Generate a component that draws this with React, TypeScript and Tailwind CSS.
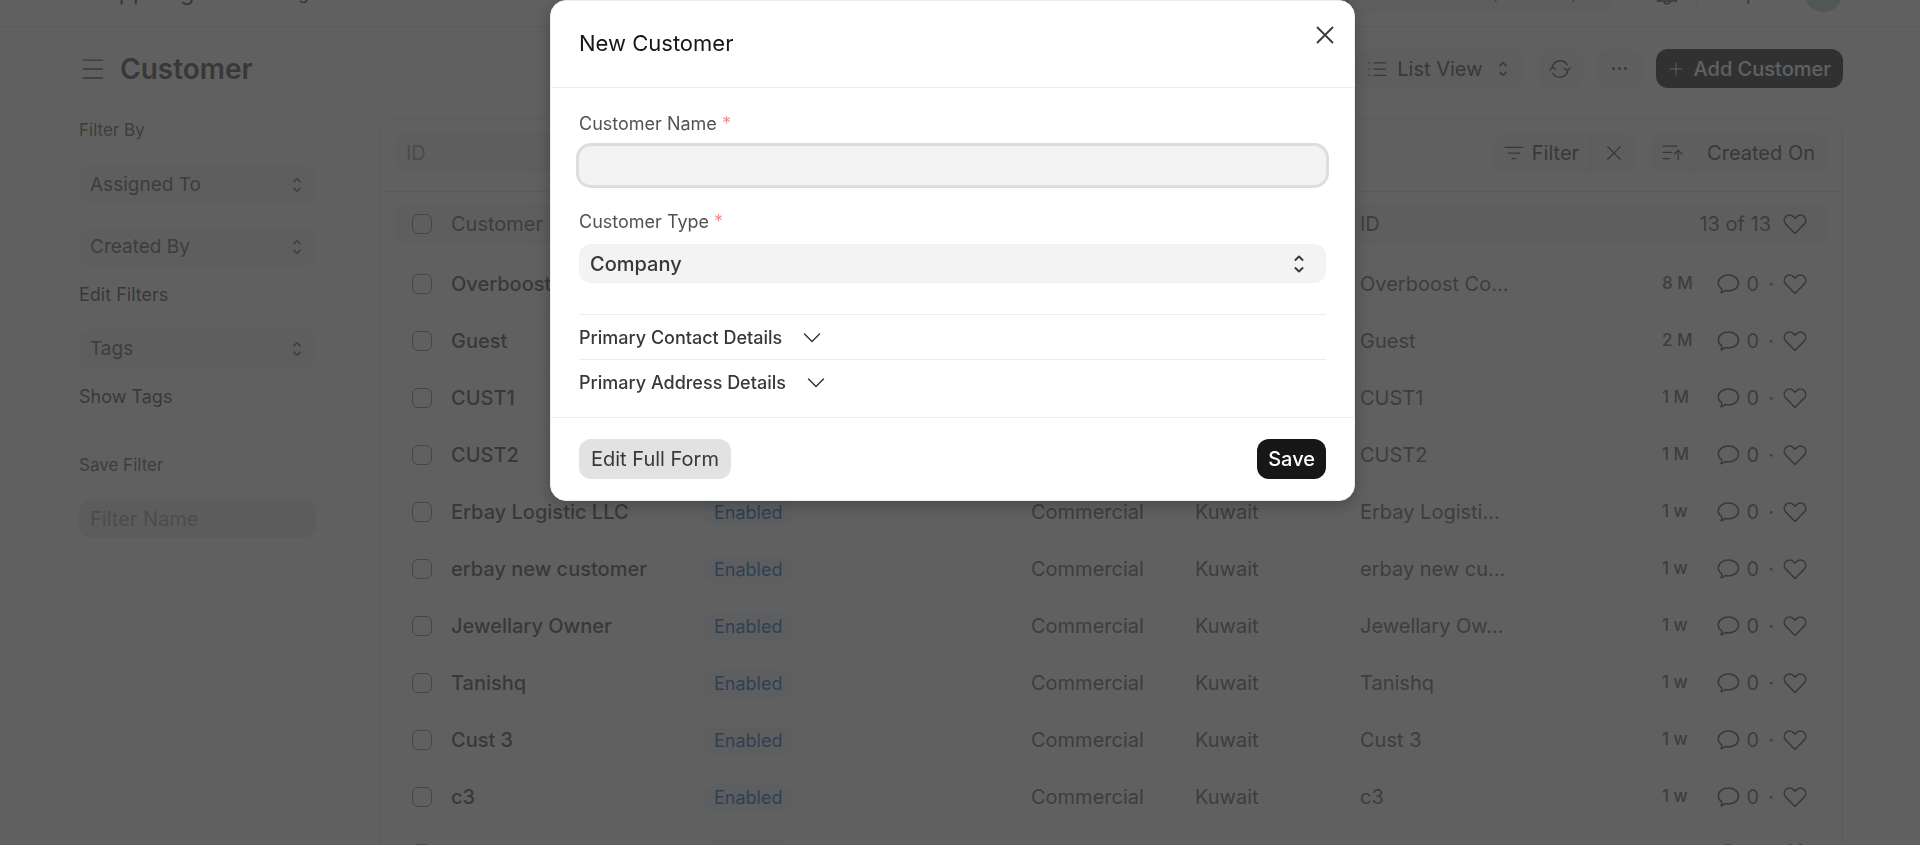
import { useState } from "react";

interface Customer {
  name: string;
  shortId: string;
  modified: string;
}

const customers: Customer[] = [
  { name: "Overboost Company", shortId: "Overboost Co…", modified: "8 M" },
  { name: "Guest", shortId: "Guest", modified: "2 M" },
  { name: "CUST1", shortId: "CUST1", modified: "1 M" },
  { name: "CUST2", shortId: "CUST2", modified: "1 M" },
  { name: "Erbay Logistic LLC", shortId: "Erbay Logisti…", modified: "1 w" },
  { name: "erbay new customer", shortId: "erbay new cu…", modified: "1 w" },
  { name: "Jewellary Owner", shortId: "Jewellary Ow…", modified: "1 w" },
  { name: "Tanishq", shortId: "Tanishq", modified: "1 w" },
  { name: "Cust 3", shortId: "Cust 3", modified: "1 w" },
  { name: "c3", shortId: "c3", modified: "1 w" },
  { name: "c2", shortId: "c2", modified: "1 w" },
];

const paths = {
  menu: "M1 1.5h14M1 8h14M1 14.5h14",
  select: "M5.6 5.3 8 3l2.4 2.3M5.6 10.7 8 13l2.4-2.3",
  close: "M3 3l10 10M13 3 3 13",
  plus: "M8 2v12M2 8h12",
  chevron: "M3 6l5 5 5-5",
  list: "M5.5 3H15M5.5 8H15M5.5 13H15M1.5 3h.5M1.5 8h.5M1.5 13h.5",
  filter: "M1 3.5h14M3.5 8h9M6.5 12.5h3",
  sort: "M1 2.5h11M1 7.5h7M1 12.5h5M13 13V6M10 8.8l3-3 3 3",
  refresh: "M2.3 7.2a5.9 5.9 0 0 1 10.9-2.3M13.7 8.800a5.9 5.9 0 0 1-10.900 2.300M.7 9l1.700-2.400L4.700 8.300M15.300 7l-1.700 2.400-2.300-1.700",
  heart: "M8 14.3 1.9 8.1C.5 6.6.5 4.500 1.800 3.100 3.200 1.700 5.500 1.700 6.900 3.100L8 4.200l1.100-1.100c1.400-1.400 3.700-1.400 5.100 0 1.300 1.400 1.300 3.500-.1 5z",
  comment: "M8.300 2c3.800 0 6.700 2.300 6.700 5.300s-2.900 5.300-6.700 5.300c-.8 0-1.600-.1-2.300-.3-.6.9-1.400 1.500-2.700 1.500.6-.9.8-1.700.5-2.700C2.400 10.200 1.500 8.900 1.500 7.300 1.500 4.300 4.500 2 8.300 2z",
  bell: "M1.700 13.300h12.600c-1.300-1-2-2-2-4.800 0-2.700-1.800-4.500-4.300-4.500S3.700 5.800 3.700 8.500c0 2.800-.7 3.800-2 4.800zM6 13.500c0 2.200 4 2.200 4 0",
};

function Icon({ name, className }: { name: keyof typeof paths; className: string }) {
  return (
    <svg
      viewBox="0 0 16 16"
      fill="none"
      stroke="currentColor"
      strokeWidth={name === "select" ? 1.3 : 1}
      strokeLinecap="round"
      strokeLinejoin="round"
      className={`shrink-0 overflow-visible ${className}`}
      aria-hidden="true"
    >
      <path d={paths[name]} />
    </svg>
  );
}

function Navbar() {
  return (
    <header className="h-[27px] overflow-hidden border-b border-[#e2e2e2]">
      <div className="-mt-[41px] flex h-[67px] items-center pr-[77px] pl-[79px]">
        <a href="#home" className="ml-6 text-[23px]">App Logo</a>
        <a href="#selling" className="ml-11 text-[18px]">Selling</a>
        <input
          aria-label="Search"
          placeholder="Search or type a command (Ctrl + G)"
          className="ml-auto h-10 w-[420px] rounded-xl bg-[#f3f3f3] px-9 text-[20px] placeholder:text-[#7c7c7c]"
        />
        <button aria-label="Notifications" className="ml-[42px]">
          <Icon name="bell" className="size-6" />
        </button>
        <div className="ml-[18px] h-9 w-px bg-[#d1d1d1]" />
        <button className="ml-4 flex items-center gap-2 text-[20px]">
          Help <Icon name="chevron" className="size-4" />
        </button>
        <div className="ml-[22px] size-[39px] rounded-full bg-[#b0d4c4]" />
      </div>
    </header>
  );
}

function SidebarButton({ label }: { label: string }) {
  return (
    <button className="flex h-10 w-full items-center justify-between rounded-xl bg-[#f3f3f3] pr-[9px] pl-[11px] text-[19px] text-[#525252]">
      {label}
      <Icon name="select" className="size-5" />
    </button>
  );
}

function Sidebar() {
  return (
    <aside className="w-[237px] shrink-0 pt-2 text-[18px]">
      <h2 className="text-[17px] leading-6 text-[#525252]">Filter By</h2>
      <div className="mt-[23px] flex flex-col gap-[22px]">
        <SidebarButton label="Assigned To" />
        <SidebarButton label="Created By" />
      </div>
      <a href="#filters" className="mt-4 block leading-6">Edit Filters</a>
      <div className="mt-[22px]">
        <SidebarButton label="Tags" />
      </div>
      <a href="#tags" className="mt-4 block leading-6">Show Tags</a>
      <label htmlFor="filter-name" className="mt-11 block text-[17px] leading-6 text-[#525252]">
        Save Filter
      </label>
      <input
        id="filter-name"
        placeholder="Filter Name"
        className="mt-[22px] h-[39px] w-full rounded-xl bg-[#e9e9e9] px-[11px] text-[20px] placeholder:text-[#999999]"
      />
    </aside>
  );
}

function Checkbox({ label }: { label: string }) {
  return (
    <input
      type="checkbox"
      aria-label={label}
      className="ml-1 block size-5 appearance-none rounded-[6px] border border-[#7c7c7c]"
    />
  );
}

function CustomerTable() {
  return (
    <table className="mx-[14px] mt-[11px] w-[calc(100%-28px)] table-fixed border-separate border-spacing-0 text-left">
      <colgroup>
        <col className="w-[14px]" />
        <col className="w-[43px]" />
        <col className="w-[251px]" />
        <col className="w-[329px]" />
        <col className="w-[164px]" />
        <col className="w-[165px]" />
        <col />
        <col className="w-[152px]" />
        <col className="w-[14px]" />
      </colgroup>
      <thead>
        <tr className="h-[42px] text-[20px] text-[#525252] [&>th]:bg-[#f3f3f3] [&>th]:p-0 [&>th]:font-normal">
          <th className="rounded-l-xl" />
          <th><Checkbox label="Select all" /></th>
          <th>Customer Name</th>
          <th>Status</th>
          <th className="truncate">Customer Group</th>
          <th>Territory</th>
          <th>ID</th>
          <th>
            <div className="flex items-center justify-end gap-3 pr-[7px]">
              13 of 13
              <Icon name="heart" className="size-6 text-[#383838]" />
            </div>
          </th>
          <th className="rounded-r-xl" />
        </tr>
      </thead>
      <tbody className="before:block before:h-[11px]">
        {customers.map((customer) => (
          <tr
            key={customer.name}
            className="h-[57px] text-[20px] text-[#525252] [&>td]:border-[#ededed] [&>td]:p-0 [&>td:not(:first-child):not(:last-child)]:border-b"
          >
            <td />
            <td><Checkbox label={`Select ${customer.name}`} /></td>
            <td>
              <a href="#customer" className="font-medium text-[#383838]">{customer.name}</a>
            </td>
            <td>
              <span className="inline-flex h-7 items-center rounded-full bg-[#edf6fd] px-3 text-[18px] text-[#0a5cb8]">
                Enabled
              </span>
            </td>
            <td>Commercial</td>
            <td>Kuwait</td>
            <td>{customer.shortId}</td>
            <td>
              <div className="flex items-center justify-end pr-[7px]">
                <span className="mr-auto text-[17px] font-medium">{customer.modified}</span>
                <Icon name="comment" className="size-6 text-[#383838]" />
                <span className="ml-[7px]">0</span>
                <span className="mr-[9px] ml-[9px]">·</span>
                <Icon name="heart" className="size-6 text-[#383838]" />
              </div>
            </td>
            <td />
          </tr>
        ))}
      </tbody>
    </table>
  );
}

function ListPage() {
  return (
    <div className="pr-[77px] pl-[79px]">
      <div className="flex h-[83px] items-center gap-[14px] text-[20px]">
        <button aria-label="Toggle sidebar" className="ml-[3px]">
          <Icon name="menu" className="size-[22px]" />
        </button>
        <h1 className="mr-auto ml-[2px] text-[28px] font-semibold">Customer</h1>
        <button className="flex h-[39px] items-center gap-[10px] rounded-xl bg-[#f3f3f3] px-[11px]">
          <Icon name="list" className="size-5" />
          List View
          <Icon name="select" className="size-5" />
        </button>
        <button aria-label="Refresh" className="flex h-[39px] w-[45px] items-center justify-center rounded-xl bg-[#f3f3f3]">
          <Icon name="refresh" className="size-[22px]" />
        </button>
        <button aria-label="More" className="flex h-[39px] w-[45px] items-center justify-center gap-[3px] rounded-xl bg-[#f3f3f3]">
          <span className="size-[3px] rounded-full bg-[#383838]" />
          <span className="size-[3px] rounded-full bg-[#383838]" />
          <span className="size-[3px] rounded-full bg-[#383838]" />
        </button>
        <button className="flex h-[39px] items-center gap-[10px] rounded-xl bg-[#171717] px-3 font-medium text-white">
          <Icon name="plus" className="size-4" />
          Add Customer
        </button>
      </div>
      <div className="flex gap-[63px]">
        <Sidebar />
        <main className="mt-2 min-w-0 flex-1 rounded-t-2xl border border-b-0 border-[#e2e2e2]">
          <div className="flex h-[73px] items-start gap-[14px] border-b border-[#e2e2e2] px-[14px] pt-[14px] text-[20px]">
            <input
              aria-label="ID"
              placeholder="ID"
              className="h-[39px] w-[237px] rounded-xl bg-[#f3f3f3] px-3 placeholder:text-[#999999]"
            />
            <div className="ml-auto flex h-10 rounded-xl bg-[#f3f3f3]">
              <button className="flex items-center gap-2 border-r border-[#e2e2e2] px-[11px]">
                <Icon name="filter" className="size-5" />
                Filter
              </button>
              <button aria-label="Clear filters" className="flex w-[45px] items-center justify-center">
                <Icon name="close" className="size-5" />
              </button>
            </div>
            <div className="flex h-10 rounded-xl bg-[#f3f3f3]">
              <button aria-label="Sort direction" className="flex w-[44px] items-center justify-center border-r border-[#e2e2e2]">
                <Icon name="sort" className="size-5" />
              </button>
              <button className="px-[13px]">Created On</button>
            </div>
          </div>
          <CustomerTable />
        </main>
      </div>
    </div>
  );
}

function NewCustomerDialog() {
  const [name, setName] = useState("");

  return (
    <div className="fixed inset-0 bg-[#383838]/80 pr-[15px]">
      <form
        role="dialog"
        aria-labelledby="dialog-title"
        className="mx-auto max-w-[805px] rounded-2xl border border-[#ededed] bg-white shadow-[0_4px_16px_rgba(0,0,0,0.25)]"
      >
        <div className="flex h-[87px] items-start justify-between border-b border-[#ededed] pr-[17px] pl-7">
          <h2 id="dialog-title" className="pt-[26px] text-[22px] leading-8 text-[#171717]">New Customer</h2>
          <button type="button" aria-label="Close" className="pt-[22px]">
            <Icon name="close" className="size-6 stroke-[1.2]" />
          </button>
        </div>
        <div className="px-7 pt-[22px] pb-[13px]">
          <label htmlFor="customer-name" className="block text-[18px] leading-7 text-[#525252]">
            Customer Name <span className="text-[#eb9091]">*</span>
          </label>
          <input
            id="customer-name"
            value={name}
            onChange={(e) => setName(e.target.value)}
            className="mt-2 block h-[39px] w-full rounded-xl bg-[#f3f3f3] px-3 text-[20px] ring-3 ring-[#dddddd] outline-none"
          />
          <label htmlFor="customer-type" className="mt-[23px] block text-[18px] leading-7 text-[#525252]">
            Customer Type <span className="text-[#eb9091]">*</span>
          </label>
          <div className="relative mt-2">
            <select
              id="customer-type"
              className="block h-[39px] w-full appearance-none rounded-xl bg-[#f3f3f3] px-[11px] text-[20px] font-medium"
            >
              <option>Company</option>
              <option>Individual</option>
            </select>
            <Icon name="select" className="pointer-events-none absolute top-2 right-[15px] size-6" />
          </div>
          <div className="mt-[31px] text-[18px] font-medium">
            <button type="button" className="flex h-[45px] w-full items-center gap-[18px] border-t border-[#ededed]">
              Primary Contact Details
              <Icon name="chevron" className="size-6" />
            </button>
            <button type="button" className="flex h-[45px] w-full items-center gap-[18px] border-t border-[#ededed]">
              Primary Address Details
              <Icon name="chevron" className="size-6" />
            </button>
          </div>
        </div>
        <div className="flex items-center justify-between border-t border-[#ededed] px-7 py-[21px] text-[20px]">
          <button type="button" className="h-10 rounded-xl bg-[#e2e2e2] px-3">Edit Full Form</button>
          <button type="button" className="h-10 rounded-xl bg-[#171717] px-[11px] font-medium text-white">Save</button>
        </div>
      </form>
    </div>
  );
}

export default function App() {
  return (
    <div className="h-screen overflow-hidden bg-white font-['Inter',sans-serif] text-[#383838]">
      <Navbar />
      <ListPage />
      <NewCustomerDialog />
    </div>
  );
}
